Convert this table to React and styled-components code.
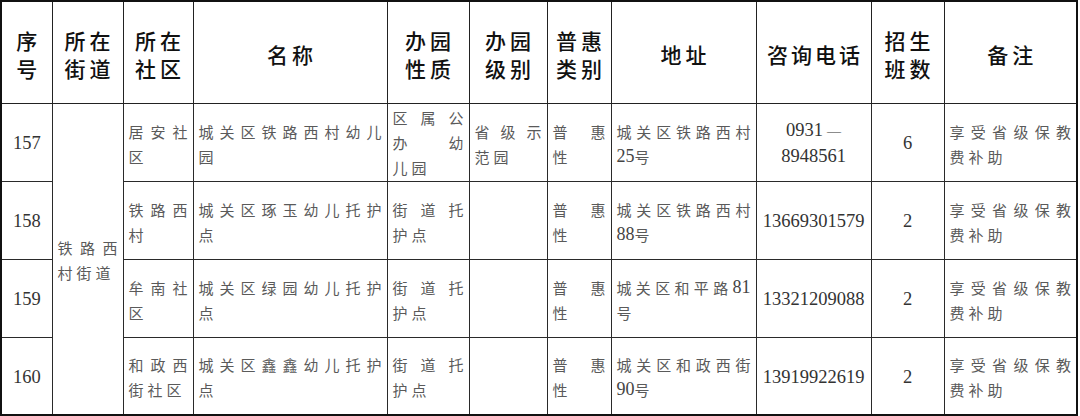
import React from 'react'
import styled, { createGlobalStyle } from 'styled-components'

const GlobalStyle = createGlobalStyle`
  html, body {
    margin: 0;
    padding: 0;
    background: #fff;
  }
  body {
    font-family: "Liberation Serif", "Noto Sans CJK SC", serif;
  }
`

const widths = [51, 71, 70, 194, 82, 78, 64, 145, 115, 73, 133]

const headers = [
  ['序', '号'],
  ['所在', '街道'],
  ['所在', '社区'],
  ['名称'],
  ['办园', '性质'],
  ['办园', '级别'],
  ['普惠', '类别'],
  ['地址'],
  ['咨询电话'],
  ['招生', '班数'],
  ['备注'],
]

// [text, spread] — spread lines are stretched to the cell width
const rows = [
  {
    no: '157',
    community: [['居安社', true], ['区']],
    name: [['城关区铁路西村幼儿', true], ['园']],
    nature: [['区属公', true], ['办幼', true], ['儿园']],
    level: [['省级示', true], ['范园']],
    kind: [['普惠', true], ['性']],
    addr: [['城关区铁路西村', true], ['25号']],
    phone: ['0931', '8948561'],
    classes: '6',
    note: [['享受省级保教', true], ['费补助']],
  },
  {
    no: '158',
    community: [['铁路西', true], ['村']],
    name: [['城关区琢玉幼儿托护', true], ['点']],
    nature: [['街道托', true], ['护点']],
    level: [],
    kind: [['普惠', true], ['性']],
    addr: [['城关区铁路西村', true], ['88号']],
    phone: ['13669301579'],
    classes: '2',
    note: [['享受省级保教', true], ['费补助']],
  },
  {
    no: '159',
    community: [['牟南社', true], ['区']],
    name: [['城关区绿园幼儿托护', true], ['点']],
    nature: [['街道托', true], ['护点']],
    level: [],
    kind: [['普惠', true], ['性']],
    addr: [['城关区和平路81', true], ['号']],
    phone: ['13321209088'],
    classes: '2',
    note: [['享受省级保教', true], ['费补助']],
  },
  {
    no: '160',
    community: [['和政西', true], ['街社区']],
    name: [['城关区鑫鑫幼儿托护', true], ['点']],
    nature: [['街道托', true], ['护点']],
    level: [],
    kind: [['普惠', true], ['性']],
    addr: [['城关区和政西街', true], ['90号']],
    phone: ['13919922619'],
    classes: '2',
    note: [['享受省级保教', true], ['费补助']],
  },
]

const Table = styled.table`
  border-collapse: collapse;
  table-layout: fixed;
  width: 1077px;
  border: 2px solid #111;
`

const HeadRow = styled.tr`
  height: 102px;
`

const BodyRow = styled.tr`
  height: 78px;
`

const HeadCell = styled.th`
  border: 1px solid #222;
  padding: 4px 0 0;
  vertical-align: middle;
  text-align: center;
  font-family: "Noto Sans CJK SC", serif;
  font-size: 21px;
  font-weight: 500;
  line-height: 28px;
  color: #111;
`

const HeadLine = styled.div`
  letter-spacing: ${(p) => p.$gap}px;
  padding-left: ${(p) => p.$gap}px;
  white-space: nowrap;
`

const Cell = styled.td`
  border: 1px solid #2a2a2a;
  padding: ${(p) => (p.$tall ? 0 : 3)}px 5px 0;
  vertical-align: middle;
  text-align: ${(p) => (p.$center ? 'center' : 'left')};
  font-size: 15px;
  line-height: 25px;
  color: #5a5a5a;
  overflow: hidden;
`

const Num = styled.div`
  font-family: "Liberation Serif", serif;
  font-size: 18.5px;
  line-height: 25px;
  color: #333;
  white-space: nowrap;
`

const Dash = styled.span`
  font-size: 14px;
  margin-left: 4px;
`

const Line = styled.div`
  display: flex;
  justify-content: ${(p) => (p.$spread ? 'space-between' : 'flex-start')};
  white-space: nowrap;
`

const Token = styled.span`
  font-family: ${(p) => (p.$digit ? '"Liberation Serif", serif' : '"Noto Sans CJK SC", sans-serif')};
  font-size: ${(p) => (p.$digit ? '18px' : '15px')};
  color: ${(p) => (p.$digit ? '#444' : '#5a5a5a')};
  margin-right: ${(p) => (p.$gap ? 4 : 0)}px;
`

function Lines({ lines }) {
  return lines.map(([text, spread], i) => {
    const tokens = text.match(/\d+|./g) || []
    return (
      <Line key={i} $spread={spread}>
        {tokens.map((t, j) => {
          const digit = /\d/.test(t)
          return (
            <Token key={j} $digit={digit} $gap={!spread && !digit}>
              {t}
            </Token>
          )
        })}
      </Line>
    )
  })
}

export default function App() {
  return (
    <>
      <GlobalStyle />
      <Table>
        <colgroup>
          {widths.map((w, i) => (
            <col key={i} style={{ width: w }} />
          ))}
        </colgroup>
        <thead>
          <HeadRow>
            {headers.map((h, i) => (
              <HeadCell key={i}>
                {h.map((line, j) => (
                  <HeadLine key={j} $gap={line.length > 2 ? 3 : 4}>
                    {line}
                  </HeadLine>
                ))}
              </HeadCell>
            ))}
          </HeadRow>
        </thead>
        <tbody>
          {rows.map((r, i) => (
            <BodyRow key={r.no}>
              <Cell $center>
                <Num>{r.no}</Num>
              </Cell>
              {i === 0 && (
                <Cell rowSpan={4}>
                  <Lines lines={[['铁路西', true], ['村街道']]} />
                </Cell>
              )}
              <Cell>
                <Lines lines={r.community} />
              </Cell>
              <Cell>
                <Lines lines={r.name} />
              </Cell>
              <Cell $tall={r.nature.length > 2}>
                <Lines lines={r.nature} />
              </Cell>
              <Cell>
                <Lines lines={r.level} />
              </Cell>
              <Cell>
                <Lines lines={r.kind} />
              </Cell>
              <Cell>
                <Lines lines={r.addr} />
              </Cell>
              <Cell $center>
                {r.phone.length > 1 ? (
                  <>
                    <Num>
                      {r.phone[0]}
                      <Dash>—</Dash>
                    </Num>
                    <Num>{r.phone[1]}</Num>
                  </>
                ) : (
                  <Num>{r.phone[0]}</Num>
                )}
              </Cell>
              <Cell $center>
                <Num>{r.classes}</Num>
              </Cell>
              <Cell>
                <Lines lines={r.note} />
              </Cell>
            </BodyRow>
          ))}
        </tbody>
      </Table>
    </>
  )
}
